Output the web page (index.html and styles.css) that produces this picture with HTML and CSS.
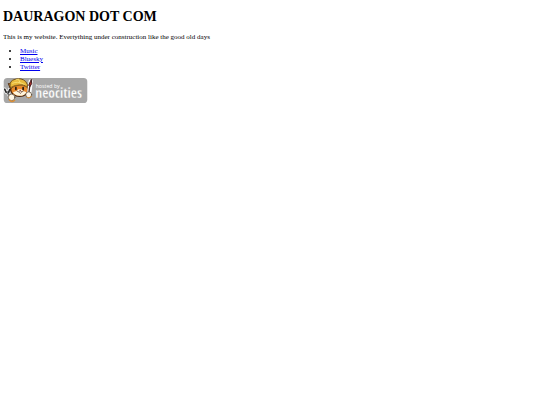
FILE: index.html
```html
<!DOCTYPE html>
<html lang="en">
<head>
<meta charset="utf-8">
<meta name="viewport" content="width=device-width, initial-scale=1">
<title>DAURAGON DOT COM</title>
<link rel="stylesheet" href="styles.css">
</head>
<body>
<h1>DAURAGON DOT COM</h1>
<p>This is my website. Evertything under construction like the good old days</p>
<ul>
<li><a href="#music">Music</a></li>
<li><a href="#bluesky">Bluesky</a></li>
<li><a href="#twitter">Twitter</a></li>
</ul>
<a class="host" href="#neocities">
<svg class="badge" viewBox="0 0 254 76" role="img">
<rect width="254" height="76" rx="11" fill="#a7a7a7"/>
<g stroke-linecap="round" stroke-linejoin="round">
<path d="M3 34 7 43 15 44 18 35M10 43 24 62" fill="none" stroke="#fff" stroke-width="10"/>
<path d="M3 34 7 43 15 44 18 35M10 43 24 62" fill="none" stroke="#292929" stroke-width="5"/>
<path d="M10 43 24 61" fill="none" stroke="#c7c7c7" stroke-width="2"/>
<path d="M15 17 29 20 24 41Z" fill="#f49b32" stroke="#553014" stroke-width="3"/>
<ellipse cx="48" cy="35" rx="27" ry="21" fill="#e98a2b" stroke="#49260e" stroke-width="4"/>
<path d="M28 43Q38 43 45 34L54 34Q60 43 70 43Q63 54 48 54Q34 53 28 43Z" fill="#fff5dc"/>
<path d="M19 23Q18 8 34 4Q54-2 67 11Q75 20 71 29Q63 18 47 22Q33 22 22 31Z" fill="#e9ba3c" stroke="#71501a" stroke-width="3"/>
<path d="M27 16Q40 8 62 19M37 6 45 3 50 16" fill="none" stroke="#f7dc72" stroke-width="3"/>
<path d="M24 27Q47 15 69 27" fill="none" stroke="#9b6820" stroke-width="3"/>
<path d="M37 29v6M59 29v6" stroke="#221913" stroke-width="5"/>
<path d="M47 36h7l-4 4Z" fill="#d96868"/>
<path d="M50 39Q44 45 40 40M50 39Q56 46 60 40M47 44Q50 51 54 44" fill="none" stroke="#4d251a" stroke-width="2"/>
<path d="M82 10 77 50" stroke="#fff" stroke-width="13"/>
<path d="M80 18 76 48" stroke="#4e3024" stroke-width="4"/>
<path d="M80 13 76 22 80 26 85 17 84 5Z" fill="#a72d28" stroke="#411c1d" stroke-width="3"/>
<circle cx="24" cy="59" r="10" fill="#fff6e6" stroke="#493b2c" stroke-width="2"/>
<path d="M17 67Q24 75 33 68" fill="none" stroke="#d98e36" stroke-width="4"/>
<circle cx="76" cy="51" r="9" fill="#fff6e6" stroke="#493b2c" stroke-width="2"/>
<path d="M70 59Q76 64 84 57" fill="none" stroke="#d98e36" stroke-width="3"/>
</g>
<text class="small" x="97" y="29">hosted by</text>
<text class="large" x="96" y="60">neocities</text>
</svg>
</a>
</body>
</html>
```
FILE: styles.css
```css
body {
  margin: 3px;
  background: #fff;
  color: #000;
  font: 7px/8px "Liberation Serif", "Times New Roman", serif;
}

h1 {
  margin: 6px 0 8px;
  font-size: 14px;
  line-height: 16px;
}

p {
  margin: 0 0 6px;
}

ul {
  margin: 0 0 7px;
  padding-left: 17px;
}

a {
  color: #00e;
}

.host,
.badge {
  display: block;
  width: 85px;
}

.badge {
  height: 25px;
}

.badge text {
  fill: #fff;
}

.small {
  font-family: "Open Sans", sans-serif;
  font-size: 16px;
}

.large {
  font-family: "Open Sans Condensed", "Open Sans", sans-serif;
  font-size: 41px;
  font-weight: 300;
  stroke: #a7a7a7;
  stroke-width: 1px;
}
```
